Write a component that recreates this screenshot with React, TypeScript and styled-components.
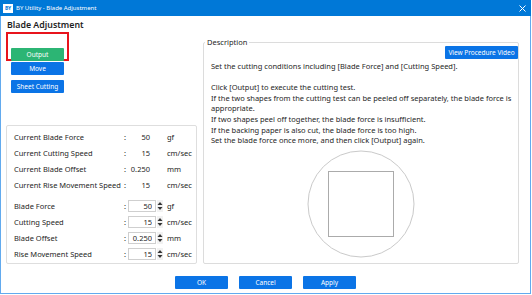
import React from "react";
import styled, { createGlobalStyle } from "styled-components";

const Global = createGlobalStyle`
  html, body { margin: 0; padding: 0; background: #fff; }
  body { font-family: "Noto Sans", "Open Sans", sans-serif; color: #1e1e1e; }
  * { box-sizing: border-box; }
`;

const Window = styled.div`
  width: 531px;
  height: 294px;
  display: flex;
  flex-direction: column;
`;

const TitleBar = styled.div`
  height: 16px;
  flex: none;
  background: #0078d7;
  display: flex;
  align-items: center;
  padding: 0 5px 0 3px;
  gap: 3px;
  color: #fff;
`;

const AppIcon = styled.span`
  width: 10px;
  height: 9px;
  background: #fff;
  color: #0078d7;
  font-size: 5px;
  font-weight: 700;
  line-height: 9px;
  text-align: center;
  letter-spacing: -0.2px;
`;

const TitleText = styled.span`
  font-size: 6px;
  line-height: 16px;
  flex: 1;
`;

const Frame = styled.div`
  flex: 1;
  display: flex;
  flex-direction: column;
  border: 1px solid #62aaee;
  border-top: none;
  padding: 3px 10px 0 5px;
`;

const Heading = styled.h1`
  margin: 0 0 0 1px;
  font-size: 8.8px;
  line-height: 13px;
  font-weight: 600;
`;

const Main = styled.div`
  display: flex;
  gap: 6px;
  height: 232px;
`;

const LeftCol = styled.div`
  width: 191px;
  flex: none;
  display: flex;
  flex-direction: column;
  align-items: flex-start;
`;

const Highlight = styled.div`
  width: 63px;
  height: 29px;
  border: 2px solid #e8141c;
  padding: 6px 3px;
`;

const Btn = styled.button<{ $green?: boolean; $w?: number }>`
  width: ${(p) => p.$w ?? 53}px;
  height: 13px;
  border: none;
  border-radius: 1px;
  padding: 0;
  background: ${(p) => (p.$green ? "#2cb574" : "#0b74e6")};
  color: #fff;
  font-family: inherit;
  font-size: 6.5px;
  line-height: 13px;
  white-space: nowrap;
  overflow: hidden;
`;

const SideBtn = styled(Btn)<{ $top: number }>`
  margin: ${(p) => p.$top}px 0 0 5px;
`;

const Panel = styled.div`
  margin-top: auto;
  width: 191px;
  height: 139px;
  border: 1px solid #dedede;
  border-radius: 2px;
  padding: 3px 0 0 7px;
`;

const Group = styled.div<{ $gap?: number }>`
  margin-top: ${(p) => p.$gap ?? 0}px;
`;

const Row = styled.div`
  display: grid;
  grid-template-columns: 110px 4px 28px 7px auto;
  align-items: center;
  height: 16px;
  font-size: 7.5px;
  white-space: nowrap;
`;

const Label = styled.span``;
const Colon = styled.span`
  text-align: left;
`;
const Value = styled.span`
  text-align: right;
  padding-right: 6px;
`;
const Unit = styled.span`
  grid-column: 5;
  padding-left: 4px;
`;

const NumInput = styled.input`
  width: 28px;
  height: 12px;
  border: 1px solid #cfcfcf;
  padding: 0 3px 0 0;
  font-family: inherit;
  font-size: 7.5px;
  text-align: right;
  color: #1e1e1e;
  outline: none;
`;

const Spin = styled.svg`
  margin-left: 1px;
  display: block;
`;

const Desc = styled.fieldset`
  margin: 5px 0 0 0;
  width: 316px;
  flex: none;
  height: 227px;
  border: 1px solid #dcdcdc;
  border-radius: 2px;
  padding: 0;
  min-width: 0;
  display: flex;
  flex-direction: column;
`;

const Legend = styled.legend`
  font-size: 7.5px;
  line-height: 10px;
  padding: 0 2px;
  margin-left: 1px;
`;

const VideoRow = styled.div`
  display: flex;
  justify-content: flex-end;
  margin-top: -1px;
`;

const Text = styled.div`
  padding: 2px 0 0 7px;
  font-size: 7.5px;
  line-height: 10.6px;
  white-space: nowrap;
`;

const Line = styled.div`
  min-height: 10.6px;
`;

const Figure = styled.div`
  flex: 1;
  display: flex;
  align-items: center;
  justify-content: center;
`;

const Footer = styled.div`
  display: flex;
  justify-content: center;
  gap: 11px;
  margin-top: 12px;
  padding-left: 5px;
`;

const Spinner = () => (
  <Spin width="6" height="12" viewBox="0 0 6 12">
    <rect x="0" y="0" width="6" height="12" fill="#f2f2f2" />
    <path d="M3 2 L5.5 5 L0.5 5 Z" fill="#333" />
    <path d="M0.5 7 L5.5 7 L3 10 Z" fill="#333" />
  </Spin>
);

const current = [
  ["Current Blade Force", "50", "gf"],
  ["Current Cutting Speed", "15", "cm/sec"],
  ["Current Blade Offset", "0.250", "mm"],
  ["Current Rise Movement Speed", "15", "cm/sec"],
];

const inputs = [
  ["Blade Force", "50", "gf"],
  ["Cutting Speed", "15", "cm/sec"],
  ["Blade Offset", "0.250", "mm"],
  ["Rise Movement Speed", "15", "cm/sec"],
];

const lines = [
  "Set the cutting conditions including [Blade Force] and [Cutting Speed].",
  "",
  "Click [Output] to execute the cutting test.",
  "If the two shapes from the cutting test can be peeled off separately, the blade force is",
  "appropriate.",
  "If two shapes peel off together, the blade force is insufficient.",
  "If the backing paper is also cut, the blade force is too high.",
  "Set the blade force once more, and then click [Output] again.",
];

export default function App() {
  return (
    <>
      <Global />
      <Window>
        <TitleBar>
          <AppIcon>BY</AppIcon>
          <TitleText>BY Utility - Blade Adjustment</TitleText>
          <svg width="7" height="7" viewBox="0 0 7 7">
            <path d="M0.5 0.5 L6.5 6.5 M6.5 0.5 L0.5 6.5" stroke="#fff" strokeWidth="1" />
          </svg>
        </TitleBar>
        <Frame>
          <Heading>Blade Adjustment</Heading>
          <Main>
            <LeftCol>
              <Highlight>
                <Btn $green>Output</Btn>
              </Highlight>
              <SideBtn $top={1}>Move</SideBtn>
              <SideBtn $top={5}>Sheet Cutting</SideBtn>
              <Panel>
                <Group>
                  {current.map(([l, v, u]) => (
                    <Row key={l}>
                      <Label>{l}</Label>
                      <Colon>:</Colon>
                      <Value>{v}</Value>
                      <Unit>{u}</Unit>
                    </Row>
                  ))}
                </Group>
                <Group $gap={5}>
                  {inputs.map(([l, v, u]) => (
                    <Row key={l}>
                      <Label>{l}</Label>
                      <Colon>:</Colon>
                      <NumInput defaultValue={v} />
                      <Spinner />
                      <Unit>{u}</Unit>
                    </Row>
                  ))}
                </Group>
              </Panel>
            </LeftCol>
            <Desc>
              <Legend>Description</Legend>
              <VideoRow>
                <Btn $w={73}>View Procedure Video</Btn>
              </VideoRow>
              <Text>
                {lines.map((t, i) => (
                  <Line key={i}>{t}</Line>
                ))}
              </Text>
              <Figure>
                <svg width="108" height="108" viewBox="0 0 108 108">
                  <circle cx="54" cy="54" r="53" fill="none" stroke="#cacaca" strokeWidth="1" />
                  <rect x="21.5" y="21.5" width="65" height="65" fill="none" stroke="#ababab" strokeWidth="1" />
                </svg>
              </Figure>
            </Desc>
          </Main>
          <Footer>
            <Btn>OK</Btn>
            <Btn>Cancel</Btn>
            <Btn>Apply</Btn>
          </Footer>
        </Frame>
      </Window>
    </>
  );
}
